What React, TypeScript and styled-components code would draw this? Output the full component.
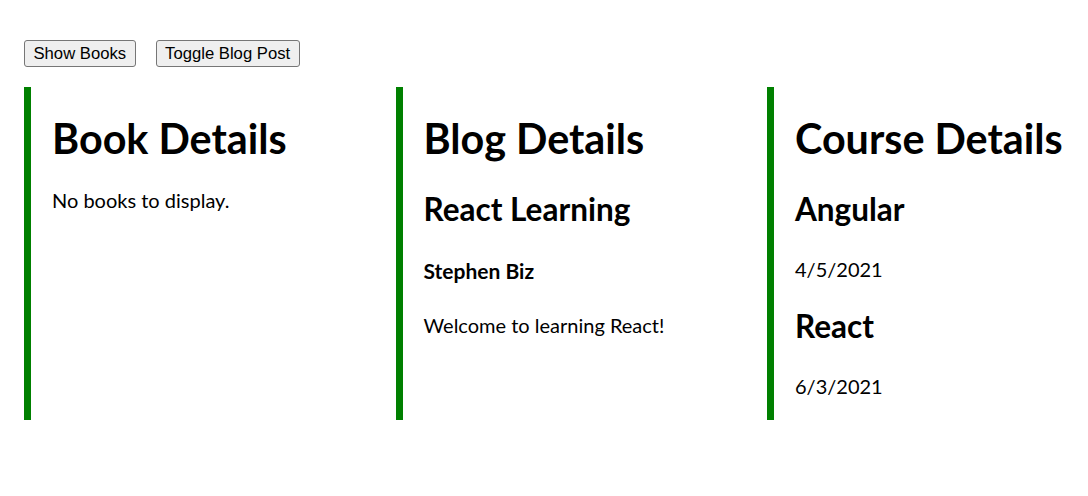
import styled, { createGlobalStyle } from "styled-components";

const GlobalStyle = createGlobalStyle`
  body {
    margin: 0;
    background: #ffffff;
    color: #000000;
    font-family: "Lato", "Noto Sans", sans-serif;
    overflow: hidden;
  }
`;

const Page = styled.div`
  padding: 40px 0 0 24px;
`;

const Toolbar = styled.div`
  display: flex;
  gap: 20px;
`;

const Button = styled.button`
  height: 27px;
  padding: 0 8.5px;
  font-family: "Liberation Sans", Arial, sans-serif;
  font-size: 16.67px;
  color: #000000;
  background: #efefef;
  border: 1px solid #767676;
  border-radius: 3px;
  cursor: pointer;
`;

const Columns = styled.div`
  display: flex;
  margin-top: 20px;
`;

const Panel = styled.section`
  flex: 0 0 371.5px;
  box-sizing: border-box;
  border-left: 7px solid #008000;
  padding-left: 21px;
  line-height: 1.33;
`;

const Title = styled.h1`
  font-size: 41.3px;
  font-weight: 700;
  margin: 24px 0 20.7px;
`;

const ItemName = styled.h2`
  font-size: 31.5px;
  font-weight: 700;
  margin: 23px 0 25.5px;
`;

const Author = styled.h4`
  font-size: 21px;
  font-weight: 700;
  margin: 26.6px 0;
`;

const Text = styled.p`
  font-size: 20px;
  margin: 20px 0;
`;

const books: { id: number; name: string }[] = [];

const blogs = [
  { id: 1, title: "React Learning", author: "Stephen Biz", content: "Welcome to learning React!" },
];

const courses = [
  { id: 1, name: "Angular", date: "4/5/2021" },
  { id: 2, name: "React", date: "6/3/2021" },
];

export default function App() {
  return (
    <>
      <GlobalStyle />
      <Page>
        <Toolbar>
          <Button>Show Books</Button>
          <Button>Toggle Blog Post</Button>
        </Toolbar>
        <Columns>
          <Panel>
            <Title>Book Details</Title>
            {books.length === 0 ? (
              <Text>No books to display.</Text>
            ) : (
              books.map((b) => <ItemName key={b.id}>{b.name}</ItemName>)
            )}
          </Panel>
          <Panel>
            <Title>Blog Details</Title>
            {blogs.map((b) => (
              <div key={b.id}>
                <ItemName>{b.title}</ItemName>
                <Author>{b.author}</Author>
                <Text>{b.content}</Text>
              </div>
            ))}
          </Panel>
          <Panel>
            <Title>Course Details</Title>
            {courses.map((c) => (
              <div key={c.id}>
                <ItemName>{c.name}</ItemName>
                <Text>{c.date}</Text>
              </div>
            ))}
          </Panel>
        </Columns>
      </Page>
    </>
  );
}
